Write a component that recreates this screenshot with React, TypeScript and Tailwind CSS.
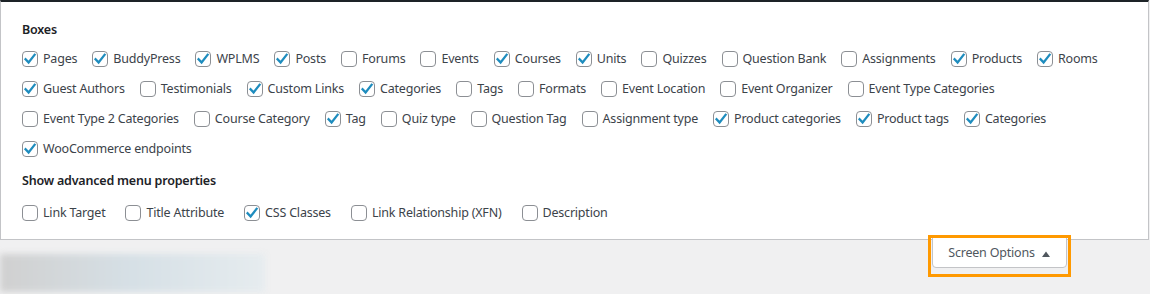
import React from "react";

type Item = { label: string; checked: boolean };

const rows: Item[][] = [
  [
    { label: "Pages", checked: true },
    { label: "BuddyPress", checked: true },
    { label: "WPLMS", checked: true },
    { label: "Posts", checked: true },
    { label: "Forums", checked: false },
    { label: "Events", checked: false },
    { label: "Courses", checked: true },
    { label: "Units", checked: true },
    { label: "Quizzes", checked: false },
    { label: "Question Bank", checked: false },
    { label: "Assignments", checked: false },
    { label: "Products", checked: true },
    { label: "Rooms", checked: true },
  ],
  [
    { label: "Guest Authors", checked: true },
    { label: "Testimonials", checked: false },
    { label: "Custom Links", checked: true },
    { label: "Categories", checked: true },
    { label: "Tags", checked: false },
    { label: "Formats", checked: false },
    { label: "Event Location", checked: false },
    { label: "Event Organizer", checked: false },
    { label: "Event Type Categories", checked: false },
  ],
  [
    { label: "Event Type 2 Categories", checked: false },
    { label: "Course Category", checked: false },
    { label: "Tag", checked: true },
    { label: "Quiz type", checked: false },
    { label: "Question Tag", checked: false },
    { label: "Assignment type", checked: false },
    { label: "Product categories", checked: true },
    { label: "Product tags", checked: true },
    { label: "Categories", checked: true },
  ],
  [{ label: "WooCommerce endpoints", checked: true }],
];

const advanced: Item[] = [
  { label: "Link Target", checked: false },
  { label: "Title Attribute", checked: false },
  { label: "CSS Classes", checked: true },
  { label: "Link Relationship (XFN)", checked: false },
  { label: "Description", checked: false },
];

function Box({ checked }: { checked: boolean }) {
  return (
    <span className="w-4 h-4 shrink-0 rounded-[4px] border border-[#8c8f94] bg-white flex items-center justify-center">
      {checked && (
        <svg width="14" height="14" viewBox="0 0 14 14">
          <path
            d="M2.6 7.2 L5.6 10.4 L11.6 2.8"
            fill="none"
            stroke="#1e8cbe"
            strokeWidth="2.3"
            strokeLinecap="square"
          />
        </svg>
      )}
    </span>
  );
}

function Row({ items, wide }: { items: Item[]; wide?: boolean }) {
  return (
    <div className="flex items-center h-[30px]">
      {items.map((it, i) => (
        <label
          key={i}
          className={
            wide
              ? "flex items-center gap-[5px] mr-[20px] whitespace-nowrap"
              : "flex items-center gap-[5px] mr-[15px] whitespace-nowrap"
          }
        >
          <Box checked={it.checked} />
          <span>{it.label}</span>
        </label>
      ))}
    </div>
  );
}

export default function App() {
  return (
    <div
      className="w-[1150px] h-[294px] bg-[#f0f0f1] text-[12.5px] tracking-[-0.2px] text-[#3c434a] overflow-hidden"
      style={{ fontFamily: '"Noto Sans", "Open Sans", sans-serif' }}
    >
      <div className="border-t-2 border-[#1d2327] border-x border-b border-x-[#c3c4c7] border-b-[#c3c4c7] bg-white w-[1149px] pl-[21px] pt-[18px] pb-[11px]">
        <h5 className="font-semibold text-[#1d2327] leading-5 mb-[4px]">Boxes</h5>
        <div className="flex flex-col">
          {rows.map((r, i) => (
            <Row key={i} items={r} />
          ))}
        </div>
        <h5 className="font-semibold text-[#1d2327] leading-5 mt-[7px] mb-[7px]">
          Show advanced menu properties
        </h5>
        <Row items={advanced} wide />
      </div>

      <div className="flex items-start justify-between pr-[83px]">
        <div className="mt-[14px] w-[265px] h-[38px] bg-gradient-to-r from-[#d0d0d0] via-[#d6e0e6] to-[#e6ecef] blur-[3px]" />
        <div className="relative -mt-[4px]">
          <div className="absolute -inset-x-[4px] -top-[1px] -bottom-[9px] border-[3px] border-[#ff9900] pointer-events-none" />
          <div className="w-[135px] h-[32px] pt-[3px] bg-white border border-[#c3c4c7] rounded-b-[4px] flex items-center justify-center gap-[6px] text-[#50575e]">
            <span>Screen Options</span>
            <svg width="10" height="8" viewBox="0 0 10 8">
              <path d="M1 7 L5 1.5 L9 7 Z" fill="#50575e" />
            </svg>
          </div>
        </div>
      </div>
    </div>
  );
}
